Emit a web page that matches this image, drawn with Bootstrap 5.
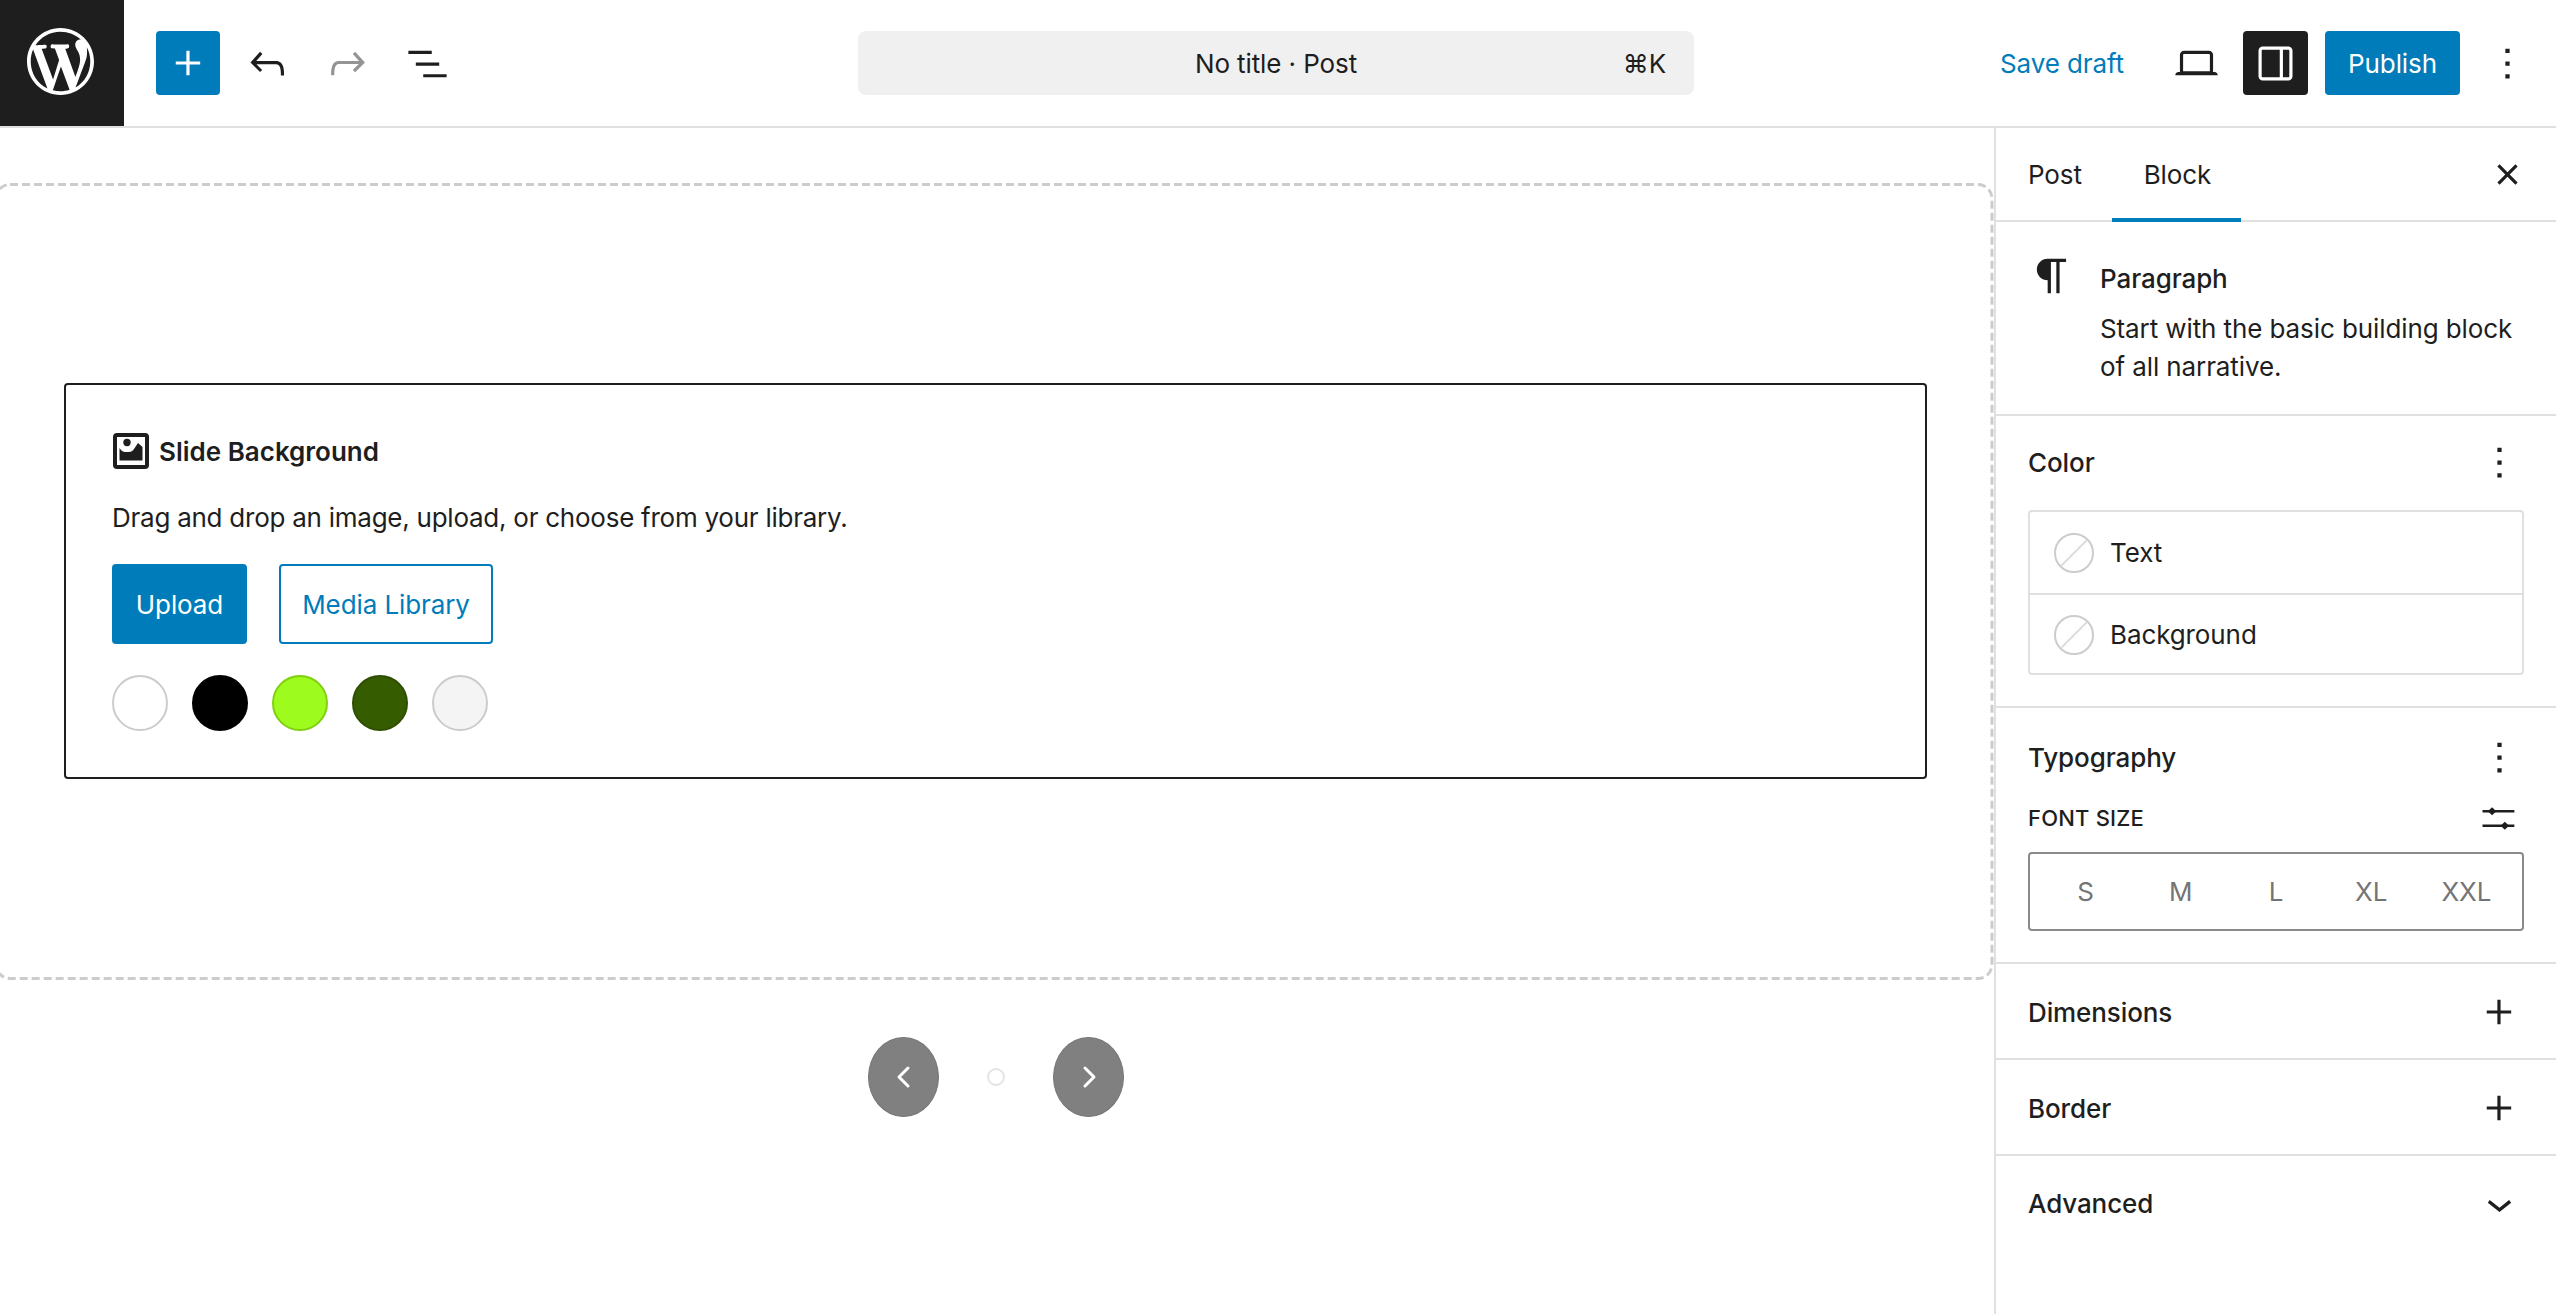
<!DOCTYPE html>
<html lang="en">
<head>
<meta charset="utf-8">
<title>No title · Post</title>
<link href="https://cdn.jsdelivr.net/npm/bootstrap@5.3.0/dist/css/bootstrap.min.css" rel="stylesheet">
<style>
html,body{height:100%;margin:0}
body{font-family:Inter,"Liberation Sans",sans-serif;font-size:26px;letter-spacing:-.1px;color:#1e1e1e;background:#fff;overflow:hidden}
svg{display:block;fill:currentColor;flex:none}
.wp-top{height:128px;border-bottom:2px solid #e0e0e0}
.wp-left{width:858px}
.wp-logo{width:124px;height:126px;background:#1e1e1e;color:#fff;padding:0 4px 3px 0}
.wp-ico{width:51px;height:51px;color:#1e1e1e}
.wp-add{width:64px;height:64px;background:#007cba;border-radius:4px;color:#fff;margin-left:32px;margin-right:22px}
.wp-tool{margin-right:29px}
.wp-redo{color:#949494}
.wp-cmd{width:836px;height:64px;background:#f0f0f0;border-radius:8px;padding:0 28px}
.wp-cmd-title{left:0;right:0;text-align:center}
.wp-right{padding-right:23px}
.wp-save{color:#007cba;margin-right:47px}
.wp-toggle{width:65px;height:64px;background:#1e1e1e;color:#fff;border-radius:4px;margin:0 17px 0 21px}
.wp-pub{width:135px;height:64px;background:#007cba;color:#fff;border-radius:4px;margin-right:22px}
.wp-main{height:1186px}
.wp-canvas{padding:55px 0 0 0;width:1994px}
.wp-block{height:797px;padding-top:200px}
.wp-dash{left:0;top:0;width:100%;height:100%;pointer-events:none}
.wp-ph{margin:0 67px 0 64px;height:396px;border:2px solid #1e1e1e;border-radius:4px;padding:48px 46px 0 46px}
.wp-ph-title{font-weight:600;gap:10px;height:36px;letter-spacing:0}
.wp-ph-title svg{margin-left:1px}
.wp-ph-text{margin:30px 0 27px;line-height:38px;letter-spacing:-.25px}
.wp-up{width:135px;height:80px;background:#007cba;color:#fff;border-radius:4px;margin-right:32px}
.wp-lib{width:214px;height:80px;border:2px solid #007cba;color:#007cba;border-radius:4px}
.wp-swatches{gap:24px;margin-top:31px}
.wp-sw{width:56px;height:56px;border-radius:50%;border:2px solid #ccc}
.wp-pager{margin-top:57px;padding-left:868px;height:80px}
.wp-nav{width:71px;height:80px;border-radius:50%;background:#808080;border:1px solid #757575;color:#fff}
.wp-dot{width:18px;height:18px;border-radius:50%;border:2px solid #e4e4e4;margin:0 48px}
.wp-side{width:562px;border-left:2px solid #e0e0e0}
.wp-tabs{height:94px;border-bottom:2px solid #e0e0e0;padding-left:32px}
.wp-tab{height:94px;color:#1e1e1e;margin-bottom:-2px}
.wp-tab-post{margin-right:32px;padding-bottom:2px}
.wp-tab-on{width:129px;margin-left:-2px;border-bottom:4px solid #007cba;justify-content:center;padding:2px 0 0 2px}
.wp-x{margin-right:23px}
.wp-card-head{height:194px;border-bottom:2px solid #e0e0e0;padding:37px 0 0 32px;gap:24px}
.wp-para{width:52px;height:52px;margin-top:-9px;margin-left:-2px;margin-right:-2px}
.wp-card-title{font-weight:500;line-height:38px;margin-top:1px}
.wp-card-text{line-height:37.5px;margin-top:12px;width:440px}
.wp-sec{padding:0 32px;border-bottom:2px solid #e0e0e0}
.wp-sec-title{font-weight:500;height:94px;padding-bottom:2px}
.wp-color{height:292px}
.wp-list{border:2px solid #e0e0e0;border-radius:4px;height:165px}
.wp-list-row{height:81px;padding-left:24px;gap:16px}
.wp-list-row+.wp-list-row{border-top:2px solid #e0e0e0}
.wp-none{width:40px;height:40px}
.wp-typo{height:256px;padding-top:3px}
.wp-fs{font-size:22px;font-weight:500;height:36px;margin-top:-5px;letter-spacing:.2px}
.wp-seg{height:79px;border:2px solid #8a8a8a;border-radius:4px;padding:0 8px;margin-top:16px;color:#757575}
.wp-seg span{flex:1 1 0;text-align:center}
.wp-fold{height:96px;padding-top:2px}
.wp-fold-last{padding-top:0;padding-bottom:2px}
.wp-k{margin-right:-1px}
.wp-slid{width:51px;height:51px}
</style>
</head>
<body class="d-flex flex-column">
<header class="wp-top d-flex align-items-center flex-shrink-0">
  <div class="wp-left d-flex align-items-center">
    <div class="wp-logo d-flex align-items-center justify-content-center">
      <svg width="67" height="67" viewBox="0 0 20 20"><path d="M20 10c0-5.51-4.49-10-10-10C4.48 0 0 4.49 0 10c0 5.52 4.48 10 10 10 5.51 0 10-4.48 10-10zM7.78 15.37L4.37 6.22c.55-.02 1.17-.08 1.17-.08.5-.06.44-1.13-.06-1.11 0 0-1.45.11-2.37.11-.18 0-.37 0-.58-.01C4.12 2.69 6.87 1.11 10 1.11c2.33 0 4.45.87 6.05 2.34-.68-.11-1.65.39-1.65 1.58 0 .74.45 1.36.9 2.1.35.61.55 1.36.55 2.46 0 1.49-1.4 5-1.4 5l-3.03-8.37c.54-.02.82-.17.82-.17.5-.05.44-1.25-.06-1.22 0 0-1.44.12-2.38.12-.87 0-2.33-.12-2.33-.12-.5-.03-.56 1.2-.06 1.22l.92.08 1.26 3.41zM17.41 10c.24-.64.74-1.87.43-4.25.7 1.29 1.05 2.71 1.05 4.25 0 3.29-1.73 6.24-4.4 7.78.97-2.59 1.94-5.2 2.92-7.78zM6.1 18.09C3.12 16.65 1.11 13.53 1.11 10c0-1.3.23-2.48.72-3.59C3.25 10.3 4.67 14.2 6.1 18.09zm4.03-6.63l2.58 6.98c-.86.29-1.76.45-2.71.45-.79 0-1.57-.11-2.29-.33.81-2.38 1.62-4.74 2.42-7.1z"/></svg>
    </div>
    <div class="wp-add d-flex align-items-center justify-content-center">
      <svg class="wp-ico" style="color:#fff" viewBox="0 0 24 24"><path d="M11 12.5V17.5H12.5V12.5H17.5V11H12.5V6H11V11H6V12.5H11Z"/></svg>
    </div>
    <svg class="wp-ico wp-tool" viewBox="0 0 24 24"><path d="M18.3 11.7c-.6-.6-1.4-.9-2.3-.9H6.7l2.9-3.3-1.1-1-4.5 5L8.5 16l1-1-2.7-2.7H16c.5 0 .9.2 1.3.5 1 1 1 3.4 1 4.5v.3h1.5v-.2c0-1.5 0-4.3-1.5-5.7z"/></svg>
    <svg class="wp-ico wp-tool wp-redo" viewBox="0 0 24 24"><path d="M15.6 6.5l-1.1 1 2.9 3.3H8c-.9 0-1.7.3-2.3.9-1.4 1.5-1.4 4.2-1.4 5.6v.2h1.5v-.3c0-1.1 0-3.5 1-4.5.3-.3.7-.5 1.3-.5h9.2L14.5 15l1.1 1.1 4.6-4.6-4.6-5z"/></svg>
    <svg class="wp-ico" viewBox="0 0 24 24"><path d="M3 6h11v1.5H3V6Zm3.5 5.5h11V13h-11v-1.5ZM21 17H10v1.5h11V17Z"/></svg>
  </div>
  <div class="wp-cmd position-relative d-flex align-items-center justify-content-end">
    <span class="wp-cmd-title position-absolute">No title · Post</span>
    <span>⌘K</span>
  </div>
  <div class="wp-right flex-grow-1 d-flex align-items-center justify-content-end">
    <span class="wp-save">Save draft</span>
    <svg class="wp-ico" viewBox="0 0 24 24"><path d="M20.5 16h-.7V8c0-1.1-.9-2-2-2H6.2c-1.1 0-2 .9-2 2v8h-.7c-.8 0-1.5.7-1.5 1.5h20c0-.8-.7-1.5-1.5-1.5zM5.7 8c0-.3.2-.5.5-.5h11.6c.3 0 .5.2.5.5v7.6H5.7V8z"/></svg>
    <div class="wp-toggle d-flex align-items-center justify-content-center">
      <svg class="wp-ico" style="color:#fff" viewBox="0 0 24 24"><path d="M18 4H6c-1.1 0-2 .9-2 2v12c0 1.1.9 2 2 2h12c1.1 0 2-.9 2-2V6c0-1.1-.9-2-2-2zm-4 14.5H6c-.3 0-.5-.2-.5-.5V6c0-.3.2-.5.5-.5h8v13zm4.5-.5c0 .3-.2.5-.5.5h-2.5v-13H18c.3 0 .5.2.5.5v12z"/></svg>
    </div>
    <div class="wp-pub d-flex align-items-center justify-content-center">Publish</div>
    <svg class="wp-ico" viewBox="0 0 24 24"><path d="M13 19h-2v-2h2v2zm0-6h-2v-2h2v2zm0-6h-2V5h2v2z"/></svg>
  </div>
</header>
<div class="wp-main d-flex">
  <main class="wp-canvas flex-shrink-0">
    <div class="wp-block position-relative">
      <svg class="wp-dash position-absolute" style="fill:none"><rect x="-4" y="1.500" width="1996" height="794" rx="14" stroke="#ccc" stroke-width="3" stroke-dasharray="8 4"/></svg>
      <div class="wp-ph">
        <div class="wp-ph-title d-flex align-items-center">
          <svg width="36" height="36" viewBox="0 0 36 36" style="fill:none"><rect x="2" y="2" width="32" height="32" rx="2" stroke="#1e1e1e" stroke-width="4"/><circle cx="14" cy="9.500" r="3.700" fill="#1e1e1e"/><path d="M6.500 15C9 19 11 19 14 19s5 0 7-3l4-6 4.500 4V27.500H6.500z" fill="#1e1e1e"/></svg>
          <span>Slide Background</span>
        </div>
        <div class="wp-ph-text">Drag and drop an image, upload, or choose from your library.</div>
        <div class="d-flex">
          <div class="wp-up d-flex align-items-center justify-content-center">Upload</div>
          <div class="wp-lib d-flex align-items-center justify-content-center">Media Library</div>
        </div>
        <div class="wp-swatches d-flex">
          <div class="wp-sw" style="background:#fff"></div>
          <div class="wp-sw" style="background:#000;border-color:#000"></div>
          <div class="wp-sw" style="background:#9efb1e;border-color:#80d010"></div>
          <div class="wp-sw" style="background:#365c00;border-color:#2e4f00"></div>
          <div class="wp-sw" style="background:#f4f4f4"></div>
        </div>
      </div>
    </div>
    <div class="wp-pager d-flex align-items-center">
      <div class="wp-nav d-flex align-items-center justify-content-center">
        <svg width="24" height="24" viewBox="0 0 24 24" style="fill:none"><path d="M16 3l-9 9 9 9" stroke="#fff" stroke-width="3" stroke-linecap="round" stroke-linejoin="round"/></svg>
      </div>
      <div class="wp-dot"></div>
      <div class="wp-nav d-flex align-items-center justify-content-center">
        <svg width="24" height="24" viewBox="0 0 24 24" style="fill:none"><path d="M8 3l9 9-9 9" stroke="#fff" stroke-width="3" stroke-linecap="round" stroke-linejoin="round"/></svg>
      </div>
    </div>
  </main>
  <aside class="wp-side flex-shrink-0">
    <div class="wp-tabs d-flex align-items-center">
      <div class="wp-tab wp-tab-post d-flex align-items-center">Post</div>
      <div class="wp-tab wp-tab-on d-flex align-items-center">Block</div>
      <div class="flex-grow-1"></div>
      <svg class="wp-ico wp-x" viewBox="0 0 24 24"><path d="M12 13.06l3.712 3.713 1.061-1.06L13.061 12l3.712-3.712-1.06-1.06L12 10.938 8.288 7.227l-1.061 1.06L10.939 12l-3.712 3.712 1.06 1.061L12 13.061z"/></svg>
    </div>
    <div class="wp-card-head d-flex">
      <svg class="wp-para" viewBox="0 0 24 24"><path d="m9.99609 14v-.2251l.00391.0001v6.225h1.5v-14.5h2.5v14.5h1.5v-14.5h3v-1.5h-8.50391c-2.76142 0-5 2.23858-5 5 0 2.7614 2.23858 5 5 5z"/></svg>
      <div>
        <div class="wp-card-title">Paragraph</div>
        <div class="wp-card-text">Start with the basic building block of all narrative.</div>
      </div>
    </div>
    <section class="wp-sec wp-color">
      <div class="wp-sec-title d-flex align-items-center justify-content-between">
        <span>Color</span>
        <svg class="wp-ico wp-k" viewBox="0 0 24 24"><path d="M13 19h-2v-2h2v2zm0-6h-2v-2h2v2zm0-6h-2V5h2v2z"/></svg>
      </div>
      <div class="wp-list">
        <div class="wp-list-row d-flex align-items-center">
          <svg class="wp-none" viewBox="0 0 40 40" style="fill:none"><circle cx="20" cy="20" r="19" stroke="#ccc" stroke-width="2"/><path d="M7 33L33 7" stroke="#ddd" stroke-width="2"/></svg>
          <span>Text</span>
        </div>
        <div class="wp-list-row d-flex align-items-center">
          <svg class="wp-none" viewBox="0 0 40 40" style="fill:none"><circle cx="20" cy="20" r="19" stroke="#ccc" stroke-width="2"/><path d="M7 33L33 7" stroke="#ddd" stroke-width="2"/></svg>
          <span>Background</span>
        </div>
      </div>
    </section>
    <section class="wp-sec wp-typo">
      <div class="wp-sec-title d-flex align-items-center justify-content-between">
        <span>Typography</span>
        <svg class="wp-ico wp-k" viewBox="0 0 24 24"><path d="M13 19h-2v-2h2v2zm0-6h-2v-2h2v2zm0-6h-2V5h2v2z"/></svg>
      </div>
      <div class="wp-fs d-flex align-items-center justify-content-between">
        <span>FONT SIZE</span>
        <svg class="wp-slid wp-k" viewBox="0 0 24 24"><path d="M4 8h15v1.200H4zM4 14.800h15v1.200H4z"/><path d="M8.500 6.700l2 1.900-2 1.900-2-1.900zM14.500 13.500l2 1.900-2 1.900-2-1.900z"/></svg>
      </div>
      <div class="wp-seg d-flex align-items-center">
        <span>S</span><span>M</span><span>L</span><span>XL</span><span>XXL</span>
      </div>
    </section>
    <section class="wp-sec wp-fold d-flex align-items-center justify-content-between">
      <span class="fw-medium">Dimensions</span>
      <svg class="wp-ico wp-k" viewBox="0 0 24 24"><path d="M11 12.5V17.5H12.5V12.5H17.5V11H12.5V6H11V11H6V12.5H11Z"/></svg>
    </section>
    <section class="wp-sec wp-fold d-flex align-items-center justify-content-between">
      <span class="fw-medium">Border</span>
      <svg class="wp-ico wp-k" viewBox="0 0 24 24"><path d="M11 12.5V17.5H12.5V12.5H17.5V11H12.5V6H11V11H6V12.5H11Z"/></svg>
    </section>
    <section class="wp-sec wp-fold wp-fold-last d-flex align-items-center justify-content-between border-0">
      <span class="fw-medium">Advanced</span>
      <svg class="wp-ico wp-k" viewBox="0 0 24 24"><path d="M17.5 11.6L12 16l-5.500-4.400.9-1.200L12 14l4.500-3.600 1 1.200z"/></svg>
    </section>
  </aside>
</div>
<script src="https://cdn.jsdelivr.net/npm/bootstrap@5.3.0/dist/js/bootstrap.bundle.min.js"></script>
</body>
</html>
